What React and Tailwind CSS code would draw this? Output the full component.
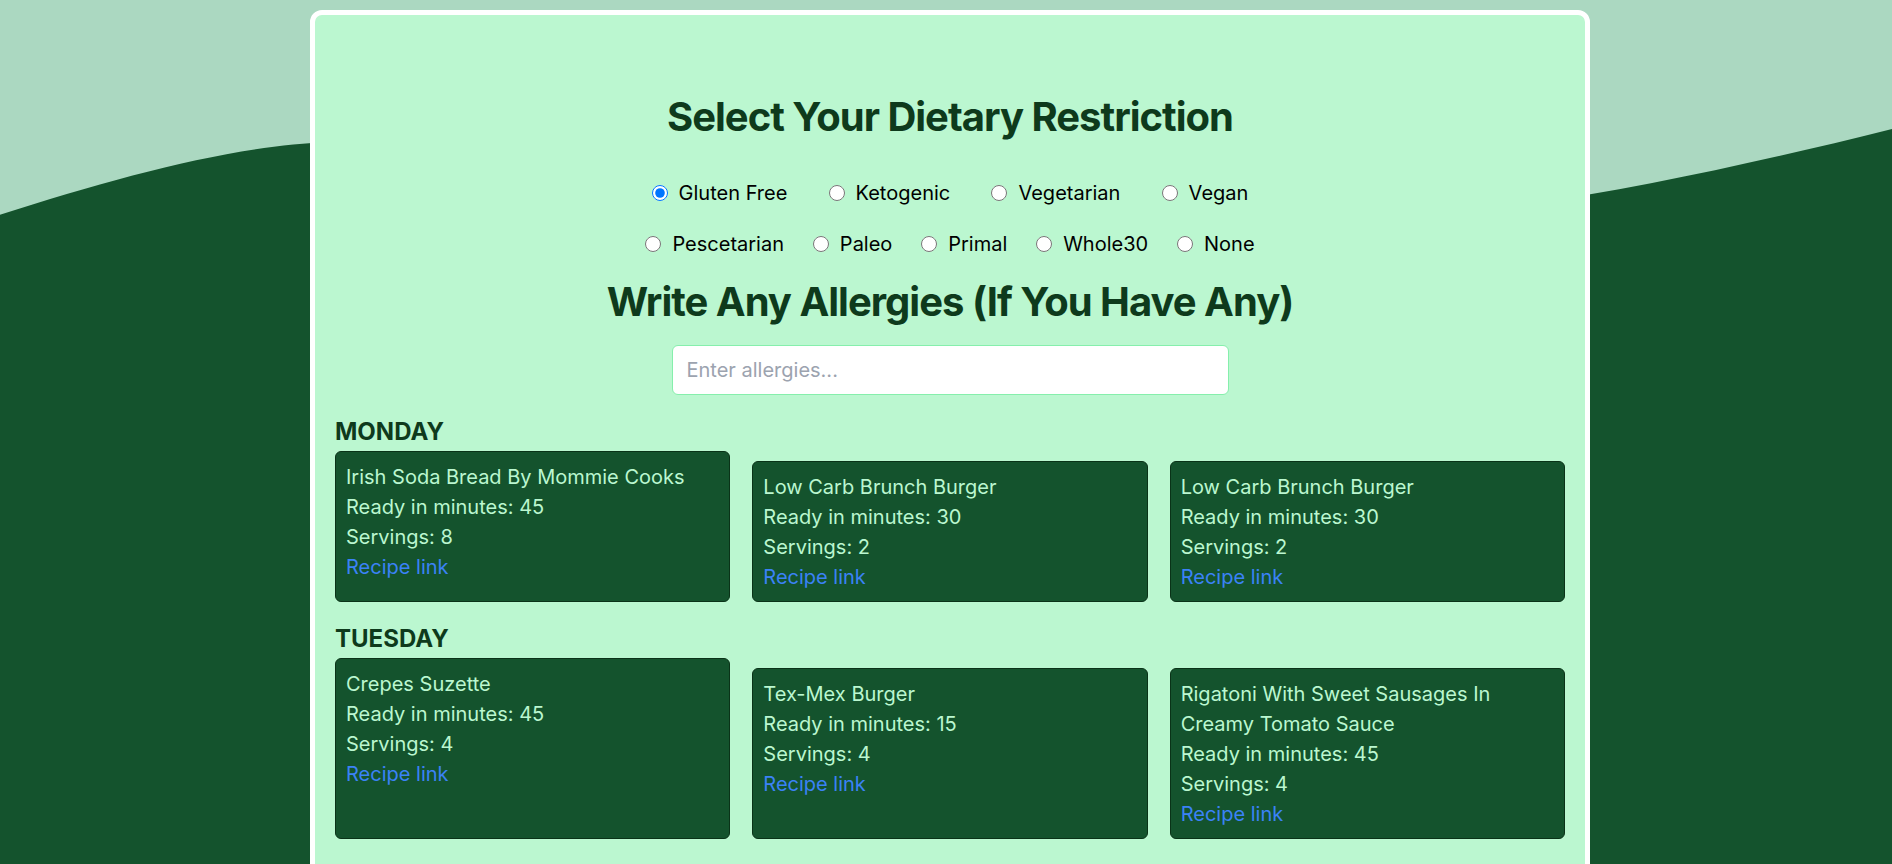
import React from "react";

const row1 = ["Gluten Free", "Ketogenic", "Vegetarian", "Vegan"];
const row2 = ["Pescetarian", "Paleo", "Primal", "Whole30", "None"];

const days = [
  {
    day: "MONDAY",
    meals: [
      { title: "Irish Soda Bread By Mommie Cooks", ready: 45, servings: 8 },
      { title: "Low Carb Brunch Burger", ready: 30, servings: 2 },
      { title: "Low Carb Brunch Burger", ready: 30, servings: 2 },
    ],
  },
  {
    day: "TUESDAY",
    meals: [
      { title: "Crepes Suzette", ready: 45, servings: 4 },
      { title: "Tex-Mex Burger", ready: 15, servings: 4 },
      { title: "Rigatoni With Sweet Sausages In Creamy Tomato Sauce", ready: 45, servings: 4 },
    ],
  },
];

function Radio({ label, checked }) {
  return (
    <label className="flex items-center gap-[11px] text-[20px] leading-[30px] text-black">
      <input
        type="radio"
        name="diet"
        defaultChecked={checked}
        className="m-0 h-4 w-4 accent-[#0075ff]"
      />
      <span>{label}</span>
    </label>
  );
}

function Card({ meal, first }) {
  return (
    <div
      className={
        "rounded-[6px] border border-[#0a3318] bg-[#14532d] px-[10px] pt-[10px] pb-[9px] text-[20px] leading-[30px] text-[#bbf7d0] " +
        (first ? "" : "mt-[10px]")
      }
    >
      <div>{meal.title}</div>
      <div>Ready in minutes: {meal.ready}</div>
      <div>Servings: {meal.servings}</div>
      <a href="#" className="text-[#3b82f6]">Recipe link</a>
    </div>
  );
}

export default function App() {
  return (
    <div
      className="relative min-h-[864px] overflow-hidden bg-[#abd8c1]"
      style={{ fontFamily: "Inter, 'Noto Sans', sans-serif" }}
    >
      <svg
        className="absolute inset-0 h-full w-full"
        viewBox="0 0 1892 864"
        preserveAspectRatio="none"
      >
        <path
          d="M0,210 C120,172 240,141 330,139 C700,134 900,230 1200,226 C1450,222 1650,185 1892,126 L1892,864 L0,864 Z"
          fill="#14532d"
        />
      </svg>

      <div className="relative z-10 ml-[310px] mt-[10px] w-[1280px] rounded-[12px] border-[5px] border-white bg-[#bbf7d0] px-[20px] pt-[78px] pb-[40px]">
        <h1 className="text-center text-[40px] font-bold leading-[48px] tracking-[-0.025em] text-[#0e3a1c]">
          Select Your Dietary Restriction
        </h1>

        <div className="mx-auto mt-[37px] flex w-[638px] justify-around">
          {row1.map((l, i) => (
            <Radio key={l} label={l} checked={i === 0} />
          ))}
        </div>
        <div className="mx-auto mt-[21px] flex w-[638px] justify-around">
          {row2.map((l) => (
            <Radio key={l} label={l} />
          ))}
        </div>

        <h2 className="mt-[19px] text-center text-[40px] font-bold leading-[48px] tracking-[-0.025em] text-[#0e3a1c]">
          Write Any Allergies (If You Have Any)
        </h2>

        <div className="mt-[19px] flex justify-center">
          <input
            type="text"
            placeholder="Enter allergies..."
            className="h-[50px] w-[557px] rounded-[6px] border border-[#86efac] bg-white px-[14px] text-[20px] text-black outline-none placeholder:text-[#9ca3af]"
          />
        </div>

        {days.map((d) => (
          <div key={d.day} className="mt-[22px]">
            <h3 className="text-[24px] font-bold leading-[30px] text-[#0e3a1c]">{d.day}</h3>
            <div className="mt-[4px] grid grid-cols-3 gap-x-[22px]">
              {d.meals.map((m, i) => (
                <Card key={i} meal={m} first={i === 0} />
              ))}
            </div>
          </div>
        ))}
      </div>
    </div>
  );
}
